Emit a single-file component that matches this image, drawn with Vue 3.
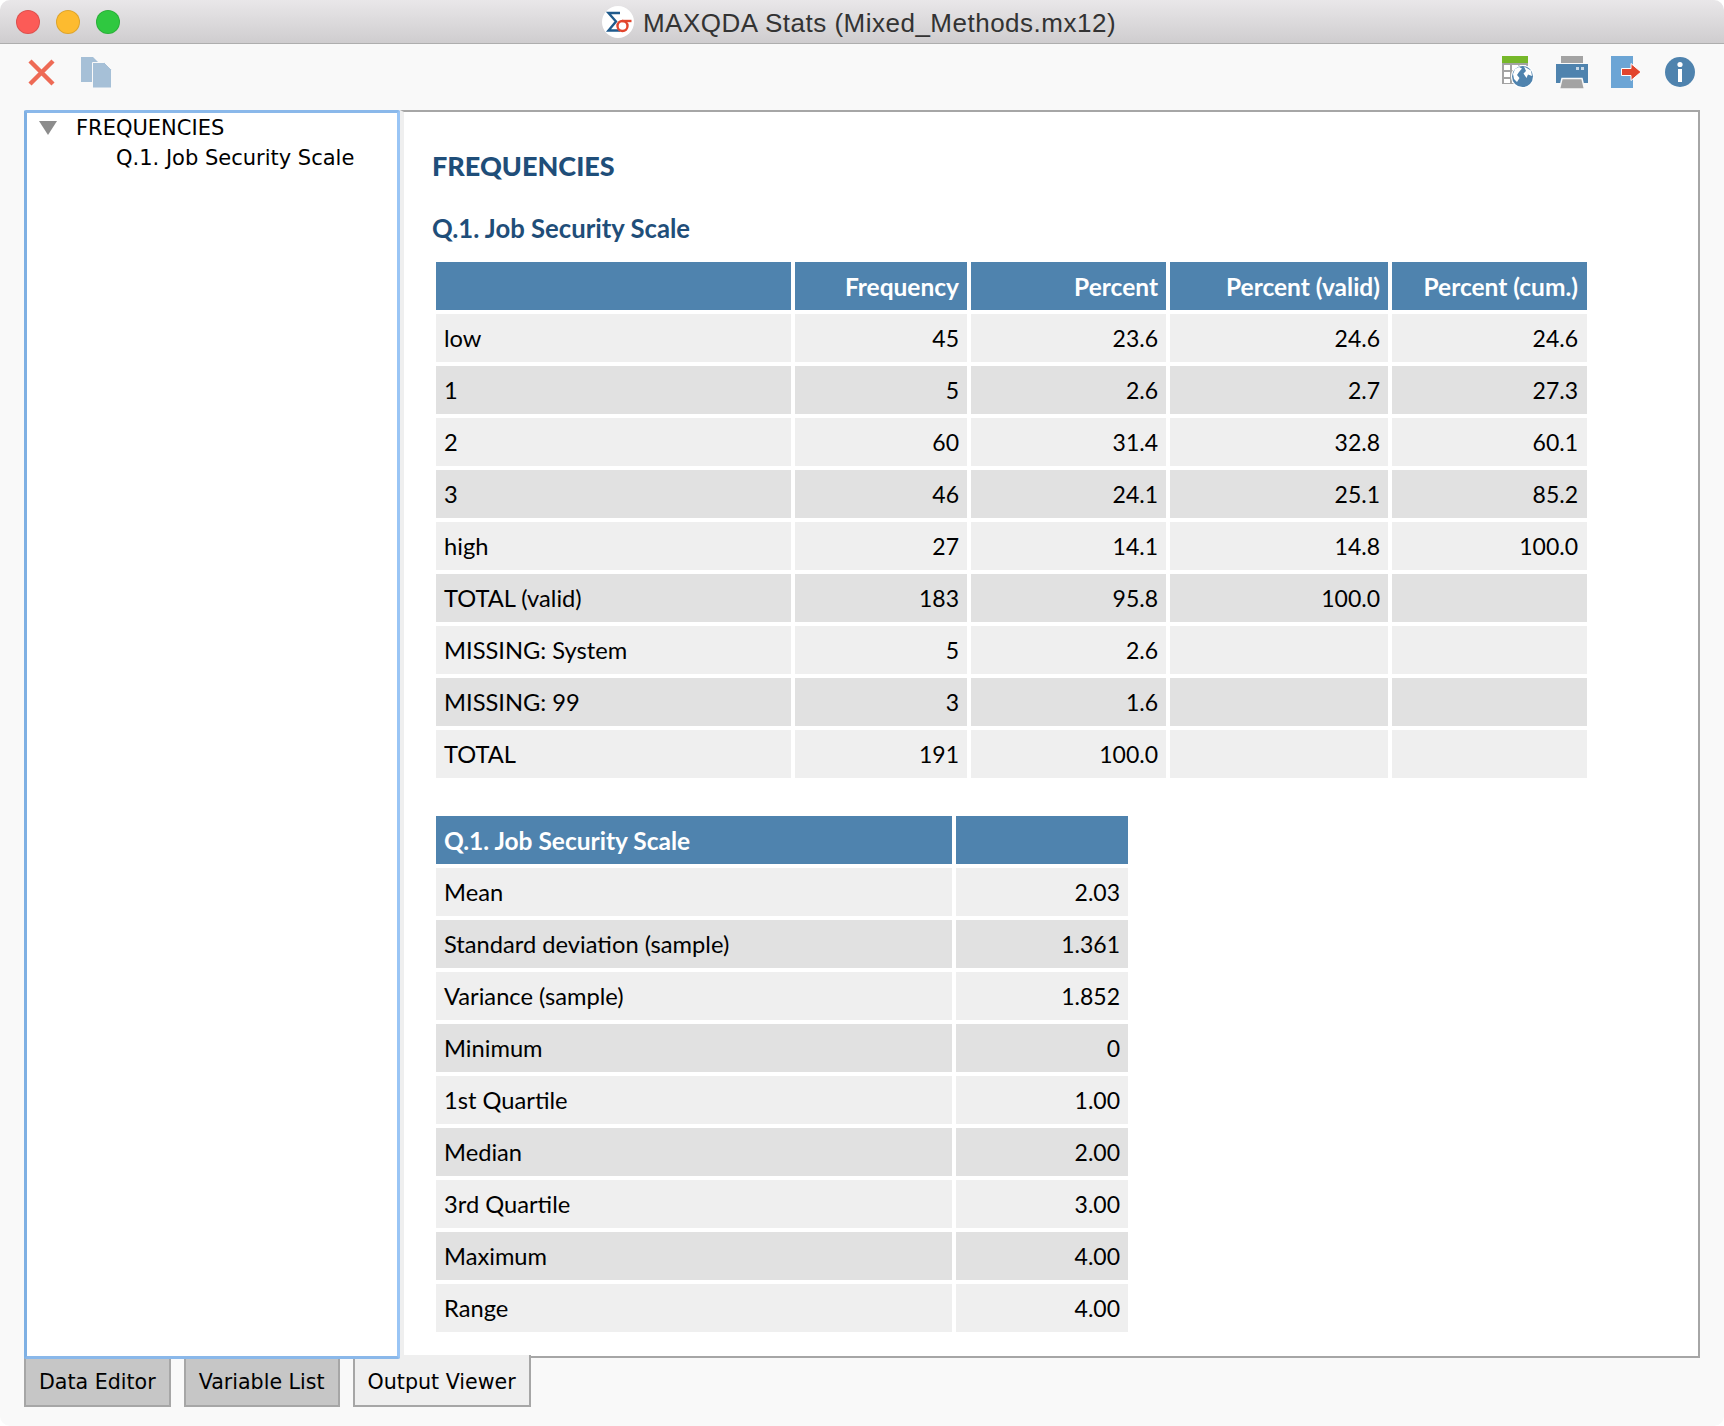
<script setup>
const freqCols = ['Frequency', 'Percent', 'Percent (valid)', 'Percent (cum.)']
const freqRows = [
  ['low', '45', '23.6', '24.6', '24.6'],
  ['1', '5', '2.6', '2.7', '27.3'],
  ['2', '60', '31.4', '32.8', '60.1'],
  ['3', '46', '24.1', '25.1', '85.2'],
  ['high', '27', '14.1', '14.8', '100.0'],
  ['TOTAL (valid)', '183', '95.8', '100.0', ''],
  ['MISSING: System', '5', '2.6', '', ''],
  ['MISSING: 99', '3', '1.6', '', ''],
  ['TOTAL', '191', '100.0', '', '']
]
const statRows = [
  ['Mean', '2.03'],
  ['Standard deviation (sample)', '1.361'],
  ['Variance (sample)', '1.852'],
  ['Minimum', '0'],
  ['1st Quartile', '1.00'],
  ['Median', '2.00'],
  ['3rd Quartile', '3.00'],
  ['Maximum', '4.00'],
  ['Range', '4.00']
]
const tabs = [
  { label: 'Data Editor', active: false },
  { label: 'Variable List', active: false },
  { label: 'Output Viewer', active: true }
]
</script>

<template>
  <div class="window">
    <header class="titlebar">
      <div class="lights">
        <span class="light red"></span>
        <span class="light yellow"></span>
        <span class="light green"></span>
      </div>
      <svg class="app-icon" width="32" height="32" viewBox="0 0 32 32">
        <circle cx="16" cy="16" r="16" fill="#fff" />
        <path d="M18 7H6.5L14 15.5L6.5 24.5H18" fill="none" stroke="#1f5a8c" stroke-width="2.4" />
        <circle cx="20.5" cy="20" r="5" fill="none" stroke="#e2452d" stroke-width="2.4" />
        <path d="M20 15H29.5" fill="none" stroke="#e2452d" stroke-width="2.4" />
      </svg>
      <span class="title">MAXQDA Stats (Mixed_Methods.mx12)</span>
    </header>

    <div class="toolbar">
      <svg class="close" width="27" height="27" viewBox="0 0 27 27">
        <path d="M2 2L25 25M25 2L2 25" stroke="#ee6a55" stroke-width="4.4" />
      </svg>
      <svg class="copy" width="31" height="31" viewBox="0 0 31 31">
        <path d="M0 0H12L18 6V25H0Z" fill="#a6c0d7" />
        <path d="M11.5 5.5H23.5L30.5 12.5V31H11.5Z" fill="#a6c0d7" stroke="#f9f9f9" stroke-width="1" />
      </svg>
      <div class="spacer"></div>
      <svg width="32" height="32" viewBox="0 0 32 32">
        <rect x="0" y="0" width="26" height="7" fill="#76b82a" />
        <path d="M0 7H26V28H0Z" fill="#a3a3a3" />
        <g fill="#fff">
          <rect x="2" y="9" width="6" height="5" />
          <rect x="10" y="9" width="6" height="5" />
          <rect x="18" y="9" width="6" height="5" />
          <rect x="2" y="16" width="6" height="5" />
          <rect x="2" y="23" width="6" height="4" />
          <rect x="10" y="16" width="6" height="5" />
          <rect x="10" y="23" width="6" height="4" />
        </g>
        <circle cx="20.5" cy="20.5" r="11.5" fill="#fff" />
        <circle cx="20.5" cy="20.5" r="10.5" fill="#4f83ae" />
        <path d="M17 11L20 12.5L17 16L15 19L17.5 22L15 26L12 23L11 18L13 13Z" fill="#fff" />
        <path d="M22 10.5L29 14.5L30 20L26 18.5L24.5 22L21.5 17.5L24 15Z" fill="#fff" />
      </svg>
      <svg class="printer" width="32" height="33" viewBox="0 0 32 33">
        <rect x="5" y="0" width="22" height="7" fill="#a3a3a3" />
        <rect x="0" y="8" width="32" height="19" fill="#4f83ae" />
        <rect x="20" y="11" width="3" height="3" fill="#c8d8e6" />
        <rect x="25" y="11" width="3" height="3" fill="#c8d8e6" />
        <path d="M6 22.5H26L28.5 33H3.5Z" fill="#a3a3a3" stroke="#f9f9f9" stroke-width="1.5" />
      </svg>
      <svg class="export" width="30" height="32" viewBox="0 0 30 32">
        <rect x="0" y="0" width="22" height="32" fill="#6ca5d5" />
        <path d="M10.5 12.5H20V7.5L30 16L20 24.5V19.5H10.5Z" fill="#e2452d" stroke="#fff" stroke-width="1" />
      </svg>
      <svg class="info" width="30" height="30" viewBox="0 0 30 30">
        <circle cx="15" cy="15" r="15" fill="#4f83ae" />
        <circle cx="15" cy="7.5" r="2.6" fill="#fff" />
        <rect x="13" y="12" width="4" height="13" fill="#fff" />
      </svg>
    </div>

    <div class="main">
      <aside class="tree">
        <div class="tree-head">
          <span class="triangle"></span>
          <span>FREQUENCIES</span>
        </div>
        <div class="tree-item">Q.1. Job Security Scale</div>
      </aside>

      <section class="output">
        <h1>FREQUENCIES</h1>
        <h2>Q.1. Job Security Scale</h2>

        <table class="freq">
          <thead>
            <tr>
              <th></th>
              <th v-for="col in freqCols" :key="col" class="num">{{ col }}</th>
            </tr>
          </thead>
          <tbody>
            <tr v-for="row in freqRows" :key="row[0]">
              <td v-for="(cell, i) in row" :key="i" :class="i > 0 ? 'num' : 'label'">{{ cell }}</td>
            </tr>
          </tbody>
        </table>

        <table class="stats">
          <thead>
            <tr>
              <th>Q.1. Job Security Scale</th>
              <th></th>
            </tr>
          </thead>
          <tbody>
            <tr v-for="row in statRows" :key="row[0]">
              <td class="label">{{ row[0] }}</td>
              <td class="num">{{ row[1] }}</td>
            </tr>
          </tbody>
        </table>
      </section>
    </div>

    <nav class="tabs">
      <div v-for="tab in tabs" :key="tab.label" class="tab" :class="{ active: tab.active }">{{ tab.label }}</div>
    </nav>
  </div>
</template>

<style>
html,
body {
  background: #fff;
}
</style>

<style scoped>
.window {
  width: 1724px;
  height: 1426px;
  background: #f9f9f9;
  border-radius: 10px;
  overflow: hidden;
  display: flex;
  flex-direction: column;
  box-sizing: border-box;
  font-family: "DejaVu Sans", sans-serif;
  color: #000;
}

.titlebar {
  position: relative;
  height: 44px;
  flex: none;
  box-sizing: border-box;
  background: linear-gradient(#e9e7e9, #cfcdcf);
  border-bottom: 1px solid #aeaeae;
  padding-right: 6px;
  display: flex;
  align-items: center;
  justify-content: center;
  gap: 9px;
}

.lights {
  position: absolute;
  left: 16px;
  top: 10px;
  display: flex;
  gap: 16px;
}

.light {
  width: 24px;
  height: 24px;
  border-radius: 50%;
  box-sizing: border-box;
  border: 1px solid rgba(0, 0, 0, 0.12);
}
.red { background: #fc5b57; }
.yellow { background: #fdbb2f; }
.green { background: #2fc840; }

.title {
  font-family: "Liberation Sans", Arial, sans-serif;
  font-size: 26px;
  color: #333;
  letter-spacing: 0.5px;
  margin-top: 3px;
}

.toolbar {
  height: 66px;
  flex: none;
  box-sizing: border-box;
  padding: 12px 29px 0 28px;
  display: flex;
  align-items: flex-start;
}
.toolbar svg { display: block; }
.toolbar .close { margin-top: 3px; }
.toolbar .copy { margin-left: 26px; margin-top: 1px; }
.toolbar .printer { margin-left: 22px; }
.toolbar .export { margin-left: 23px; }
.toolbar .info { margin-left: 24px; margin-top: 1px; }
.spacer { flex: 1; }

.main {
  height: 1248px;
  flex: none;
  margin: 0 24px;
  display: flex;
}

.tree {
  width: 376px;
  flex: none;
  box-sizing: border-box;
  background: #fff;
  border: 3px solid #8ab8ea;
  border-left-color: #7fb0e3;
  border-right-color: #9ac5f5;
  border-radius: 2px;
  font-size: 21px;
  position: relative;
  z-index: 1;
  margin-bottom: -1px;
}

.tree-head {
  height: 29px;
  display: flex;
  align-items: center;
  box-sizing: border-box;
}

.triangle {
  width: 0;
  height: 0;
  margin: 0 19px 0 12px;
  border-left: 9px solid transparent;
  border-right: 9px solid transparent;
  border-top: 14px solid #8c8c8c;
}

.tree-item {
  padding: 1px 0 0 89px;
  line-height: 31px;
}

.output {
  flex: 1;
  box-sizing: border-box;
  background: #fff;
  border: 2px solid #a6a6a6;
  border-left: 4px solid #efefef;
  padding: 0 0 0 28px;
  overflow: hidden;
  font-family: Lato, "Open Sans", sans-serif;
}

h1 {
  margin: 36px 0 0;
  font-size: 27px;
  line-height: 36px;
  font-weight: 900;
  color: #1f4e79;
}

h2 {
  margin: 29px 0 0;
  font-size: 25.7px;
  line-height: 30px;
  font-weight: 700;
  color: #1f4e79;
}

table {
  border-collapse: separate;
  border-spacing: 4px;
  table-layout: fixed;
  font-size: 23px;
}

.freq {
  width: 1159px;
  margin-top: 15px;
}
.freq th:nth-child(1) { width: 355px; }
.freq th:nth-child(2) { width: 172px; }
.freq th:nth-child(3) { width: 195px; }
.freq th:nth-child(4) { width: 218px; }
.freq th:nth-child(5) { width: 195px; }
.freq th:last-child,
.freq td:last-child { padding-right: 9px; }

.stats {
  width: 700px;
  margin-top: 30px;
}
.stats th:nth-child(1) { width: 516px; }
.stats th:nth-child(2) { width: 172px; }

th,
td {
  height: 48px;
  padding: 0 8px;
  box-sizing: border-box;
  white-space: nowrap;
  text-align: left;
}

th {
  background: #4f83ae;
  color: #fff;
  font-size: 24.5px;
  font-weight: 700;
}

td.label { font-size: 23.7px; }

tbody tr:nth-child(odd) td { background: #efefef; }
tbody tr:nth-child(even) td { background: #e1e1e1; }

th.num,
td.num { text-align: right; }

.tabs {
  display: flex;
  gap: 13px;
  margin: -1px 24px 0;
  position: relative;
  z-index: 0;
}

.tab {
  height: 50px;
  box-sizing: border-box;
  padding: 1px 13px 0;
  display: flex;
  align-items: center;
  font-size: 20.6px;
  background: #c6c6c6;
  border: 2px solid #a6a6a6;
  border-top: 0;
}

.tab.active {
  background: #efefef;
  position: relative;
  z-index: 2;
  margin-top: -2px;
  height: 52px;
  padding-top: 3px;
}
</style>
